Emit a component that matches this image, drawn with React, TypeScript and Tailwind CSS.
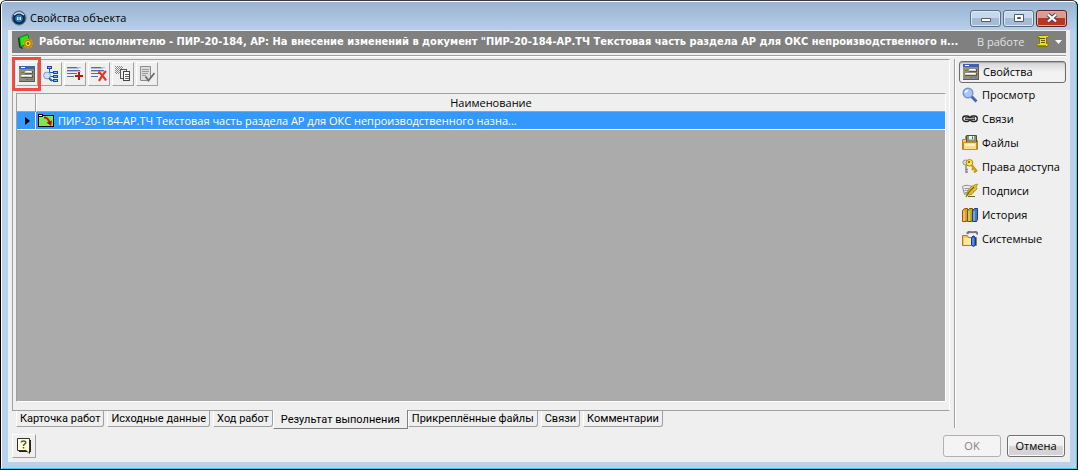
import type { ReactNode } from 'react';

function Icon({ children, className = '' }: { children: ReactNode; className?: string }) {
  return (
    <svg viewBox="0 0 16 16" className={`size-4 shrink-0 ${className}`} aria-hidden="true">
      {children}
    </svg>
  );
}

function FormIcon() {
  return (
    <Icon>
      <g shapeRendering="crispEdges">
        <path fill="#8e8e86" d="M0 0h16v16H0z" />
        <path fill="#3c62b0" d="M0 0h16v3H0z" />
        <path fill="#fff" d="M2 1h4v1H2z" />
        <path fill="#5c5c50" d="M0 15h16v1H0zM15 3h1v13h-1z" />
        <path fill="#808000" d="M2 6h3v1H2zM7 13h3v1H7zM11 13h3v1h-3z" />
        <path fill="#55554e" d="M6 7h8v1H6zM13 5h1v3h-1zM2 11h12v1H2zM13 9h1v3h-1z" />
        <path fill="#d4d4cc" d="M6 5h7v2H6zM2 9h11v2H2z" />
        <path fill="#fff" d="M7 5h5v1H7zM3 9h9v1H3z" />
      </g>
    </Icon>
  );
}

function TreeIcon() {
  return (
    <Icon>
      <g shapeRendering="crispEdges">
        <path fill="none" stroke="#2456b4" d="M6.500 2v12M7 6.500h3M7 10.500h3M7 14.500h3" />
        <path fill="#174aa8" d="M4 0h5v3H4zM10 5h5v3h-5zM10 9h5v3h-5zM10 13h5v3h-5z" />
        <path fill="#8eb4f0" d="M5 1h3v1H5zM11 6h3v1h-3zM11 10h3v1h-3zM11 14h3v1h-3z" />
      </g>
      <circle cx="4" cy="9.500" r="3.400" fill="#cfe2f5" stroke="#7e9cbc" />
      <path d="M6 12l3 3" stroke="#3467ad" strokeWidth="2" />
    </Icon>
  );
}

function ListLines() {
  return (
    <g shapeRendering="crispEdges">
      <path fill="#566e98" d="M0 1h10v1H0zM0 4h13v1H0zM0 7h10v1H0zM0 10h7v1H0z" />
      <path fill="#b4bed0" d="M10 1h4v1h-4zM0 2h12v1H0zM0 5h14v1H0z" />
    </g>
  );
}

function AddIcon() {
  return (
    <Icon>
      <ListLines />
      <path shapeRendering="crispEdges" fill="#b81808" d="M11 6h2v3h3v2h-3v3h-2v-3H8V9h3z" />
    </Icon>
  );
}

function RemoveIcon() {
  return (
    <Icon>
      <ListLines />
      <path d="M7.500 5.500C10 8 13 11 15 14.500M15 5C12 8 10 11 8 15" fill="none" stroke="#e83420" strokeWidth="2.200" />
    </Icon>
  );
}

function CopiesIcon() {
  return (
    <Icon>
      <g shapeRendering="crispEdges">
        <path
          fill="none"
          stroke="#888"
          strokeDasharray="1 1"
          d="M0 .5h7M1 1.500h7M0 2.500h7M1 3.500h5M0 4.500h5M1 5.500h4M0 6.500h5M1 7.500h4"
        />
        <path fill="#eee" stroke="#555" d="M5.500 3.500h6v9h-6z" />
        <path fill="#f8f8f8" stroke="#444" d="M8.500 5.500h6v9h-6z" />
        <path stroke="#666" d="M10 8.500h4M10 10.500h4M10 12.500h4" />
      </g>
    </Icon>
  );
}

function ApproveIcon() {
  return (
    <Icon>
      <path fill="#ddd" stroke="#8a8a8a" d="M1.500.500h10v11l-2 3h-8z" />
      <path stroke="#999" d="M3 3.500h7M3 5.500h7M3 7.500h6M3 9.500h4" />
      <path d="M6.500 10.500l3 4 6-7.500" fill="none" stroke="#6c6c6c" strokeWidth="1.800" />
    </Icon>
  );
}

function SearchIcon() {
  return (
    <Icon>
      <path d="M9.500 9.500l5 5" stroke="#4263b8" strokeWidth="2.800" />
      <circle cx="6" cy="6" r="4.800" fill="#a8c6f4" stroke="#7590d4" strokeWidth="1.400" />
      <path d="M3.500 6a2.500 2.500 0 012.500-2.500" fill="none" stroke="#f0f8ff" strokeWidth="1.500" />
    </Icon>
  );
}

function ChainIcon() {
  return (
    <Icon>
      <g fill="none" stroke="#222" strokeWidth="1.300">
        <rect x=".7" y="5" width="7" height="5.500" rx="2.700" />
        <rect x="8.300" y="5" width="7" height="5.500" rx="2.700" />
      </g>
      <path d="M3 7.700h10" stroke="#222" strokeWidth="2.800" />
      <path d="M3.500 7.700h9" stroke="#c8c8c8" strokeWidth="1" />
    </Icon>
  );
}

function FilesIcon() {
  return (
    <Icon>
      <path fill="#f0d060" stroke="#b88420" d="M.5 4.500h3v-3h3l9 4v9H.5z" />
      <path fill="#8c9078" stroke="#4c5040" d="M4.500.500h10v9h-10z" />
      <path fill="#f0f4e8" d="M7 1h5v3.500H7z" />
      <path fill="#585c48" d="M10 1.500h1V4h-1z" />
      <path fill="#ffdc88" stroke="#c09028" d="M1.500 7.500h13v7h-13z" />
      <path fill="#fff4c4" d="M3 9h10v2H3z" />
    </Icon>
  );
}

function KeysIcon() {
  return (
    <Icon>
      <path d="M4 5v9M4 10.500h2M4 13h2" stroke="#8a8a8a" strokeWidth="1.500" />
      <circle cx="3.500" cy="3.500" r="2.500" fill="#ddd" stroke="#909090" />
      <path d="M9 5.500l6 7M11.500 9l-1.500 2M14 11.500l-2 2" stroke="#c89c10" strokeWidth="2.200" />
      <circle cx="7.500" cy="3.800" r="3.300" fill="#ffe24c" stroke="#b48a08" />
      <circle cx="7" cy="3" r="1" fill="#705800" />
    </Icon>
  );
}

function SignIcon() {
  return (
    <Icon>
      <path fill="#eee" stroke="#888" d="M.5 3.500c3-2 6-1 10 0l-1 8c-3-1-5-1-7 0z" />
      <path d="M2.500 5.500h5M2.500 7.500h4M3 9.500h4" stroke="#999" />
      <path
        fill="#e8bc30"
        stroke="#a07c08"
        strokeWidth=".7"
        d="M5 12c0-5 3-9 10.500-11-1 2-1 3-1.500 4l1 .5c-1 2-2 3-4 3l1 .6c-2 2-4 3-6 3z"
      />
      <path d="M4 14c2-4 4-7 8-10M6 13.500h7" fill="none" stroke="#606c1c" strokeWidth="1.200" />
    </Icon>
  );
}

function BooksIcon() {
  return (
    <Icon>
      <path fill="#e89830" stroke="#985010" d="M.5 3.500l2-2h3v11l-1 2h-4z" />
      <path fill="#b0ac28" stroke="#606008" d="M5.500 3.500l2-2h3v11l-1 2h-4z" />
      <path fill="#4c74c0" stroke="#203c80" d="M10.500 3.500l2-2h3v11l-1 2h-4z" />
      <path d="M2 4v10" stroke="#ffe098" />
      <path d="M7 4v10" stroke="#e8e878" />
      <path d="M12 4v10" stroke="#b0ccf8" />
    </Icon>
  );
}

function SystemIcon() {
  return (
    <Icon>
      <path fill="#f8c850" stroke="#b07c18" d="M.5 4.500h5l1 2h8v8H.5z" />
      <path fill="#ffe8a0" d="M2 7h7v7H2z" />
      <path d="M5.500 3c0-2 2-2.500 3.500-1.500h3c2-1 3.500 0 3 2" fill="none" stroke="#707880" strokeWidth="2.400" />
      <path d="M7 2.500h7" stroke="#e0e4e8" />
      <path fill="#2468d8" stroke="#103c90" d="M9.500 7l1.500-2h1l1.500 2v7l-2 1.500-2-1.500z" />
      <path d="M11 7v7" stroke="#80b4ff" />
    </Icon>
  );
}

function AppIcon() {
  return (
    <Icon>
      <circle cx="8" cy="8" r="7.200" fill="#1c3854" stroke="#8096a4" strokeWidth="1" />
      <circle cx="8" cy="8.500" r="4.400" fill="#2878c0" stroke="#08182c" />
      <path d="M3 5Q8 .2 13 5" fill="none" stroke="#c8dcea" strokeWidth="1.600" />
      <path d="M6.500 7v3M8 7v3M9.500 7v3" stroke="#e8f4ff" strokeWidth=".9" />
    </Icon>
  );
}

function TaskIcon() {
  return (
    <Icon>
      <path fill="#083c08" d="M0 4l2-1v9l3 2-1 1-3-2z" />
      <path fill="#20e820" stroke="#087808" d="M1.500 3.500l8-3 1 2-1 8-7 2z" />
      <g stroke="#d8a000" strokeWidth="2">
        <path d="M10 4.500v10M5 9.500h10M6.500 6l7 7M13.500 6l-7 7" />
      </g>
      <circle cx="10" cy="9.500" r="3.200" fill="#ffd428" stroke="#b07800" />
      <circle cx="10" cy="9.500" r="1.200" fill="#705000" />
    </Icon>
  );
}

function DocumentIcon() {
  return (
    <Icon>
      <g shapeRendering="crispEdges">
        <path fill="#70f050" stroke="#000" d="M.5 2.500h15v11H.5z" />
        <path fill="#fff" stroke="#000" d="M.5 1.500h4v2h-4z" />
      </g>
      <path d="M6 4.500c4 0 5 3 5.500 5" fill="none" stroke="#e01010" strokeWidth="2" />
      <path fill="#c00808" d="M8.500 9.500l5.500-2-1 5.500z" />
    </Icon>
  );
}

function ScrollIcon() {
  return (
    <Icon>
      <path fill="#e8e020" stroke="#807800" d="M2.500 3.500l1-2h9l1 1-1 1h-1v6h2l-1 3h-10l-1-2 2-1h1v-6z" />
      <path d="M5 4.500h5M6 6.500h4M6 8.500h4" stroke="#605800" />
      <path d="M2 11.500h9" stroke="#989000" />
    </Icon>
  );
}

function HelpIcon() {
  return (
    <Icon>
      <path fill="#222" d="M3 2h12v12h-1v2l-3-2H3z" />
      <path fill="#ffffd8" stroke="#333" d="M1.500.500h12v12h-12z" />
      <path fill="#ffff80" d="M10 12h3v3z" />
      <path
        d="M5.300 4.500c0-2 4.500-2 4.500 0 0 1.500-2.300 1.300-2.300 3.500M7.500 9v1.500"
        fill="none"
        stroke="#55554c"
        strokeWidth="1.400"
      />
    </Icon>
  );
}

const tools = [
  { label: 'Свойства', icon: <FormIcon /> },
  { label: 'Структура', icon: <TreeIcon /> },
  { label: 'Добавить', icon: <AddIcon /> },
  { label: 'Удалить', icon: <RemoveIcon /> },
  { label: 'Копировать', icon: <CopiesIcon /> },
  { label: 'Согласовать', icon: <ApproveIcon /> },
];

const sections = [
  { label: 'Свойства', icon: <FormIcon /> },
  { label: 'Просмотр', icon: <SearchIcon /> },
  { label: 'Связи', icon: <ChainIcon /> },
  { label: 'Файлы', icon: <FilesIcon /> },
  { label: 'Права доступа', icon: <KeysIcon /> },
  { label: 'Подписи', icon: <SignIcon /> },
  { label: 'История', icon: <BooksIcon /> },
  { label: 'Системные', icon: <SystemIcon /> },
];

const tabs = [
  'Карточка работ',
  'Исходные данные',
  'Ход работ',
  'Результат выполнения',
  'Прикреплённые файлы',
  'Связи',
  'Комментарии',
];

const raised = 'border border-t-white border-l-white border-r-[#a0a0a0] border-b-[#a0a0a0]';

function TitleBar() {
  const button =
    'flex h-[17px] items-center justify-center rounded-[3px] border border-[#5d6f86] bg-linear-to-b from-[#c6d8ea] from-45% to-[#a2bcd8] to-50% shadow-[inset_0_0_0_1px_#dce8f4]';
  return (
    <header className="flex h-7 items-center pt-1 pr-[3px] pl-[3px]">
      <AppIcon />
      <h1 className="ml-[3px] flex-1">Свойства объекта</h1>
      <div className="flex gap-0.5">
        <button type="button" aria-label="Свернуть" className={`${button} w-[31px]`}>
          <svg viewBox="0 0 12 10" className="h-2.5 w-3">
            <path fill="#fff" stroke="#555b66" d="M1.500 5.500h9v3h-9z" />
          </svg>
        </button>
        <button type="button" aria-label="Развернуть" className={`${button} w-[31px]`}>
          <svg viewBox="0 0 12 10" className="h-2.5 w-3">
            <path fill="#fff" stroke="#555b66" d="M1.500 1.500h9v7h-9z" />
            <path fill="#a8bcd4" stroke="#555b66" d="M4.500 4.500h3v1h-3z" />
          </svg>
        </button>
        <button
          type="button"
          aria-label="Закрыть"
          className="flex h-[17px] w-[31px] items-center justify-center rounded-[3px] border border-[#5c2020] bg-linear-to-b from-[#dc9a90] from-45% to-[#bc3420] to-50% shadow-[inset_0_0_0_1px_#e8a89c]"
        >
          <svg viewBox="0 0 12 10" className="h-2.5 w-3">
            <path d="M2 1.500l8 7M10 1.500l-8 7" stroke="#50444c" strokeWidth="4" />
            <path d="M2 1.500l8 7M10 1.500l-8 7" stroke="#fff" strokeWidth="2.200" />
          </svg>
        </button>
      </div>
    </header>
  );
}

function ObjectBar() {
  return (
    <div className="flex h-[22px] items-center bg-[#808080] pr-1 pl-1.5 text-white">
      <TaskIcon />
      <h2 className="ml-[5px] min-w-0 flex-1 truncate font-['DejaVu_Sans_Condensed',sans-serif] font-bold">
        Работы: исполнителю - ПИР-20-184, АР: На внесение изменений в документ "ПИР-20-184-АР.ТЧ Текстовая часть
        раздела АР для ОКС непроизводственного н...
      </h2>
      <span className="w-[58px] shrink-0 text-[#e0e0e0]">В работе</span>
      <button type="button" aria-label="Действия" className="flex items-center gap-1">
        <ScrollIcon />
        <svg viewBox="0 0 7 4" className="h-1 w-[7px]">
          <path fill="#fff" d="M0 0h7L3.500 4z" />
        </svg>
      </button>
    </div>
  );
}

function Toolbar() {
  return (
    <div role="toolbar" aria-label="Состав" className="flex h-[33px] pt-0.5 pl-[3px]">
      {tools.map((tool, i) => (
        <div key={tool.label} className="relative h-6 w-6">
          <button
            type="button"
            aria-label={tool.label}
            className={`flex h-6 w-[22px] items-center justify-center ${raised}`}
          >
            {tool.icon}
          </button>
          {i === 0 && (
            <span className="pointer-events-none absolute -top-[5px] -left-1 z-10 h-[34px] w-[29px] border-3 border-[#f04a42]" />
          )}
        </div>
      ))}
    </div>
  );
}

function ResultTable() {
  return (
    <div className="mr-[3px] ml-[3px] flex-1 border border-t-[#a0a0a0] border-r-white border-b-white border-l-[#a0a0a0] bg-[#ababab]">
      <table className="w-full table-fixed border-separate border-spacing-0">
        <thead>
          <tr className="h-[18px] bg-[#efefef]">
            <th className="w-[19px] border-r border-b border-[#a0a0a0] p-0" aria-label="Выбор" />
            <th className="border-b border-l border-[#a0a0a0] border-l-white p-0 font-normal">Наименование</th>
          </tr>
        </thead>
        <tbody>
          <tr className="h-[18px] bg-[#3399ff] text-white">
            <td className="border-r border-b border-white p-0">
              <svg viewBox="0 0 5 8" className="ml-2 h-2 w-[5px]">
                <path fill="#000" d="M0 0l5 4-5 4z" />
              </svg>
            </td>
            <td className="border-b border-white p-0">
              <div className="flex items-center pl-[2px]">
                <DocumentIcon />
                <span className="ml-1 truncate leading-4">
                  ПИР-20-184-АР.ТЧ Текстовая часть раздела АР для ОКС непроизводственного назна...
                </span>
              </div>
            </td>
          </tr>
        </tbody>
      </table>
    </div>
  );
}

function Tabs() {
  return (
    <div role="tablist" className="flex h-[21px] items-start gap-[3px] pl-1 font-[Roboto,sans-serif]">
      {tabs.map((tab) => {
        const active = tab === 'Результат выполнения';
        return (
          <button
            key={tab}
            type="button"
            role="tab"
            aria-selected={active}
            className={
              active
                ? '-mx-[3px] -mt-px h-[19px] border-r border-b border-l border-[#808080] border-l-white bg-[#efefef] px-[7px] pt-0.5'
                : 'h-4 rounded-br-[3px] border-r border-b border-l border-[#a0a0a0] border-l-white px-[3px]'
            }
          >
            <span className="block leading-[14px]">{tab}</span>
          </button>
        );
      })}
    </div>
  );
}

function Sidebar() {
  return (
    <nav
      aria-label="Разделы"
      className="flex w-28 shrink-0 flex-col border-l border-[#a0a0a0] pt-0.5 pl-1 shadow-[inset_1px_0_0_#fff]"
    >
      {sections.map((section, i) => (
        <button
          key={section.label}
          type="button"
          aria-current={i === 0 ? 'page' : undefined}
          className={
            i === 0
              ? 'flex h-[22px] items-center gap-1 rounded-[3px] border border-[#6c6c6c] bg-linear-to-b from-[#d4d4d4] to-[#f2f2f2] to-50% pl-[3px] shadow-[inset_0_1px_1px_#a8a8a8]'
              : 'flex h-6 items-center gap-1 pl-[3px]'
          }
        >
          {section.icon}
          <span className="whitespace-nowrap">{section.label}</span>
        </button>
      ))}
    </nav>
  );
}

export default function App() {
  return (
    <div className="flex min-h-screen flex-col rounded-t-md border border-black border-t-[#3a3844] bg-black font-['Open_Sans',sans-serif] text-[11px] leading-4 text-black">
      <div className="flex flex-1 flex-col rounded-t-[5px] border border-t-white border-r-[#35d0e4] border-b-[#35d0e4] border-l-white bg-[#b9d1ea] bg-linear-to-b from-[#99b4d2] to-[#b9d1ea] to-[30px] px-1.5 pb-1.5">
        <TitleBar />
        <main className="flex flex-1 flex-col bg-[#efefef] px-1">
          <div className="pt-px">
            <ObjectBar />
          </div>
          <div className="mt-0.5 flex flex-1 border-t border-[#a0a0a0] shadow-[inset_0_1px_0_#fff]">
            <div className="flex min-w-0 flex-1 flex-col pt-[3px] pr-1">
              <section className="flex flex-1 flex-col border border-t-[#a0a0a0] border-r-white border-b-[#a0a0a0] border-l-[#a0a0a0] pb-2">
                <Toolbar />
                <ResultTable />
              </section>
              <Tabs />
            </div>
            <div className="flex pt-[3px] pb-1">
              <Sidebar />
            </div>
          </div>
          <footer className="flex items-start justify-between pt-0.5 pb-1">
            <button
              type="button"
              aria-label="Справка"
              className={`flex size-6 items-center justify-center ${raised}`}
            >
              <HelpIcon />
            </button>
            <div className="flex gap-1.5 pt-px pr-px">
              <button
                type="button"
                disabled
                className="h-[22px] w-[58px] rounded-[3px] border border-[#adb2b5] bg-[#f4f4f4] text-[#838383]"
              >
                OK
              </button>
              <button
                type="button"
                className="h-[22px] w-[58px] rounded-[3px] border border-[#707070] bg-linear-to-b from-[#f2f2f2] from-45% to-[#d4d4d4] to-55% shadow-[inset_0_0_0_1px_#fafafa]"
              >
                Отмена
              </button>
            </div>
          </footer>
        </main>
      </div>
    </div>
  );
}
